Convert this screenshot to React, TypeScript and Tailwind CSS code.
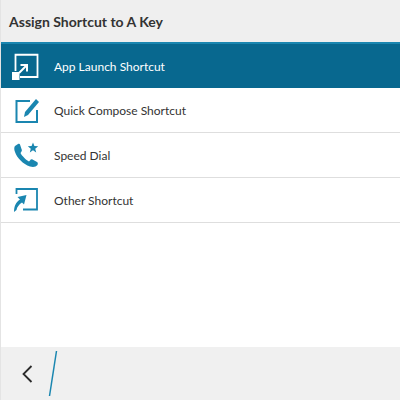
import React from 'react';

const BLUE = '#1a86b0';

const AppLaunchIcon = () => (
  <svg width="28" height="28" viewBox="0 0 28 28" fill="none">
    <path d="M4.500 19V2.750H26.500V25H9" stroke="#fff" strokeWidth="1.800" />
    <path d="M8 21L16 13M9.500 13H16V19.500" stroke="#fff" strokeWidth="2" />
    <rect x="1" y="20" width="7.500" height="8" fill="#fff" />
  </svg>
);

const ComposeIcon = () => (
  <svg width="28" height="28" viewBox="0 0 28 28" fill="none">
    <path d="M19 5H5.500V26H26V14" stroke={BLUE} strokeWidth="2" />
    <path d="M13 21L14 16L25 3L28 6L17 19Z" fill={BLUE} />
  </svg>
);

const SpeedDialIcon = () => (
  <svg width="28" height="28" viewBox="0 0 28 28">
    <path
      d="M7 3L4 5C3 6 3 9 4 11C6 17 12 23 19 25.500C22 26.500 25 26 26.500 24C27 22.500 27 21.500 26 21L21.500 18.500C20.500 18 19.500 18.500 19 19.500L18 20.500C15 19 11 15 9.500 12L10.500 10.500C11 9.500 11 9 10.500 8L9 3.500C8.700 2.500 8 2.500 7 3Z"
      fill={BLUE}
    />
    <path d="M22 1.500L23.400 5.100L27.200 5.300L24.200 7.700L25.200 11.400L22 9.300L18.800 11.400L19.800 7.700L16.800 5.300L20.600 5.100Z" fill={BLUE} />
  </svg>
);

const OtherShortcutIcon = () => (
  <svg width="28" height="28" viewBox="0 0 28 28" fill="none">
    <path d="M5.500 8V3H26V23.500H12" stroke={BLUE} strokeWidth="1.800" />
    <path d="M15.500 9L6.500 11L9 13.500C5 16 3 20 3 26L5.500 24C6 21 8 18.500 11 16.500L13 18.500Z" fill={BLUE} />
  </svg>
);

const rows = [
  { label: 'App Launch Shortcut', icon: <AppLaunchIcon />, selected: true },
  { label: 'Quick Compose Shortcut', icon: <ComposeIcon />, selected: false },
  { label: 'Speed Dial', icon: <SpeedDialIcon />, selected: false },
  { label: 'Other Shortcut', icon: <OtherShortcutIcon />, selected: false },
];

export default function App() {
  return (
    <div className="w-[400px] h-[400px] flex flex-col overflow-hidden bg-white border-l border-[#e4e4e4] font-['Lato','Open_Sans',sans-serif]">
      <div className="h-[42px] shrink-0 flex items-center pl-[8px] bg-[#efefef]">
        <h1 className="text-[14px] font-bold text-[#333333]">Assign Shortcut to A Key</h1>
      </div>

      <div className="flex-1 flex flex-col">
        {rows.map(row =>
          row.selected ? (
            <div key={row.label} className="h-[46px] flex items-center bg-[#08688f] border-t-2 border-[#1a86b0] text-white">
              <div className="w-[53px] pl-[10px] shrink-0 flex">{row.icon}</div>
              <span className="text-[12px] pt-[2px]">{row.label}</span>
            </div>
          ) : (
            <div key={row.label} className="h-[45px] flex items-center border-b border-[#dedede] text-[#333333]">
              <div className="w-[53px] pl-[10px] shrink-0 flex">{row.icon}</div>
              <span className="text-[12px] pt-[2px]">{row.label}</span>
            </div>
          ),
        )}
      </div>

      <div className="h-[53px] shrink-0 flex items-center bg-[#f0f0f0]">
        <svg className="ml-[20px]" width="14" height="20" viewBox="0 0 14 20" fill="none">
          <path d="M10.500 2L2.500 10L10.500 18" stroke="#2b2b2b" strokeWidth="1.800" />
        </svg>
        <svg className="ml-[13px]" width="10" height="48" viewBox="0 0 10 48" fill="none">
          <path d="M8.500 1L1.500 46" stroke={BLUE} strokeWidth="1.500" />
        </svg>
      </div>
    </div>
  );
}
